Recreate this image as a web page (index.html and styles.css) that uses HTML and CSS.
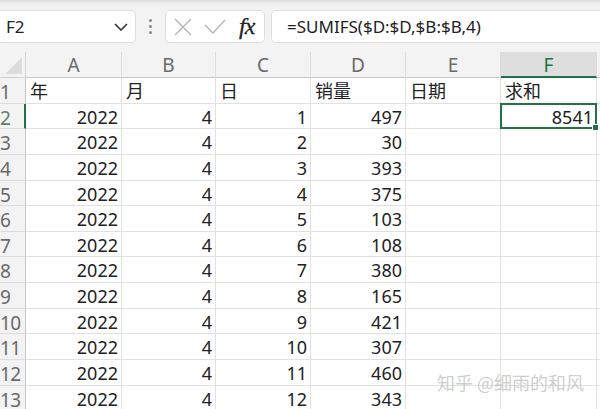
FILE: index.html
```html
<!DOCTYPE html>
<html lang="zh">
<head>
<meta charset="utf-8">
<link rel="stylesheet" href="styles.css">
</head>
<body>
<div class="app">
  <div class="topbar">
    <div class="namebox">
      <span class="name">F2</span>
      <svg class="chev" width="14" height="8" viewBox="0 0 14 8"><path d="M1 1 L7 7 L13 1" fill="none" stroke="#333" stroke-width="1.6"/></svg>
    </div>
    <div class="dots"><i></i><i></i><i></i></div>
    <div class="fxbox">
      <svg class="ic" width="20" height="20" viewBox="0 0 20 20"><path d="M2 2 L18 18 M18 2 L2 18" stroke="#b4b4b4" stroke-width="1.3" fill="none"/></svg>
      <svg class="ic" width="22" height="16" viewBox="0 0 22 16"><path d="M1 6 L9 14 L21 1" stroke="#b4b4b4" stroke-width="1.3" fill="none"/></svg>
      <span class="fx">fx</span>
    </div>
    <div class="formula">=SUMIFS($D:$D,$B:$B,4)</div>
  </div>
  <div class="sheet">
    <div class="corner"><span class="tri"></span></div>
    <div class="ch">A</div><div class="ch">B</div><div class="ch">C</div><div class="ch">D</div><div class="ch">E</div><div class="ch sel">F</div><div class="ch"></div>

    <div class="rh">1</div><div class="c">年</div><div class="c">月</div><div class="c">日</div><div class="c">销量</div><div class="c">日期</div><div class="c">求和</div><div class="c"></div>
    <div class="rh rsel">2</div><div class="c n">2022</div><div class="c n">4</div><div class="c n">1</div><div class="c n">497</div><div class="c"></div><div class="c n active">8541</div><div class="c"></div>
    <div class="rh">3</div><div class="c n">2022</div><div class="c n">4</div><div class="c n">2</div><div class="c n">30</div><div class="c"></div><div class="c"></div><div class="c"></div>
    <div class="rh">4</div><div class="c n">2022</div><div class="c n">4</div><div class="c n">3</div><div class="c n">393</div><div class="c"></div><div class="c"></div><div class="c"></div>
    <div class="rh">5</div><div class="c n">2022</div><div class="c n">4</div><div class="c n">4</div><div class="c n">375</div><div class="c"></div><div class="c"></div><div class="c"></div>
    <div class="rh">6</div><div class="c n">2022</div><div class="c n">4</div><div class="c n">5</div><div class="c n">103</div><div class="c"></div><div class="c"></div><div class="c"></div>
    <div class="rh">7</div><div class="c n">2022</div><div class="c n">4</div><div class="c n">6</div><div class="c n">108</div><div class="c"></div><div class="c"></div><div class="c"></div>
    <div class="rh">8</div><div class="c n">2022</div><div class="c n">4</div><div class="c n">7</div><div class="c n">380</div><div class="c"></div><div class="c"></div><div class="c"></div>
    <div class="rh">9</div><div class="c n">2022</div><div class="c n">4</div><div class="c n">8</div><div class="c n">165</div><div class="c"></div><div class="c"></div><div class="c"></div>
    <div class="rh">10</div><div class="c n">2022</div><div class="c n">4</div><div class="c n">9</div><div class="c n">421</div><div class="c"></div><div class="c"></div><div class="c"></div>
    <div class="rh">11</div><div class="c n">2022</div><div class="c n">4</div><div class="c n">10</div><div class="c n">307</div><div class="c"></div><div class="c"></div><div class="c"></div>
    <div class="rh">12</div><div class="c n">2022</div><div class="c n">4</div><div class="c n">11</div><div class="c n">460</div><div class="c"></div><div class="c"></div><div class="c"></div>
    <div class="rh">13</div><div class="c n">2022</div><div class="c n">4</div><div class="c n">12</div><div class="c n">343</div><div class="c"></div><div class="c"></div><div class="c"></div>
  </div>
  <div class="watermark">知乎 @细雨的和风</div>
</div>
</body>
</html>
```
FILE: styles.css
```css
html, body {
  margin: 0;
  padding: 0;
  background: #ffffff;
}
.app {
  position: relative;
  width: 600px;
  height: 409px;
  overflow: hidden;
  font-family: "Noto Sans", "Noto Sans CJK SC", sans-serif;
  color: #222;
}
.topbar {
  height: 52px;
  box-sizing: border-box;
  padding-top: 10px;
  background: linear-gradient(#dcdcdc 0px, #f1f1f1 4px, #f3f3f3 10px);
  display: flex;
  align-items: flex-start;
}
.namebox {
  margin-left: -3px;
  width: 139px;
  height: 33px;
  box-sizing: border-box;
  background: #fff;
  border: 1px solid #dedede;
  border-radius: 5px;
  display: flex;
  align-items: center;
  justify-content: space-between;
  padding: 0 7px 0 8px;
}
.name {
  font-size: 17px;
  color: #222;
}
.chev {
  display: block;
}
.dots {
  width: 29px;
  display: flex;
  flex-direction: column;
  align-items: center;
  gap: 3px;
  padding-top: 9px;
}
.dots i {
  width: 3px;
  height: 3px;
  border-radius: 50%;
  background: #8a8a8a;
  display: block;
}
.fxbox {
  width: 100px;
  height: 33px;
  box-sizing: border-box;
  background: #fff;
  border: 1px solid #dedede;
  border-radius: 5px;
  display: flex;
  align-items: center;
  padding-left: 7px;
  gap: 11px;
}
.ic {
  display: block;
}
.fx {
  font-family: "Liberation Serif", "DejaVu Serif", serif;
  font-style: italic;
  font-size: 24px;
  color: #222;
  margin-left: 2px;
  letter-spacing: -1px;
  -webkit-text-stroke: 0.3px #222;
}
.formula {
  margin-left: 6px;
  flex: 1;
  height: 33px;
  box-sizing: border-box;
  background: #fff;
  border: 1px solid #dedede;
  border-right: none;
  border-radius: 5px 0 0 5px;
  font-size: 17px;
  line-height: 31px;
  padding-left: 15px;
  color: #222;
}
.sheet {
  display: grid;
  grid-template-columns: 26px 96px 94px 95px 95px 95px 96px 10px;
  grid-template-rows: 26px;
  grid-auto-rows: 25.65px;
}
.sheet > div {
  box-sizing: border-box;
  border-right: 1px solid #e1e1e1;
  border-bottom: 1px solid #e1e1e1;
  font-size: 18px;
  white-space: nowrap;
  overflow: hidden;
}
.corner {
  background: #f3f3f3;
  position: relative;
  border-color: #d4d4d4 !important;
}
.tri {
  position: absolute;
  right: 3px;
  bottom: 3px;
  width: 0;
  height: 0;
  border-left: 17px solid transparent;
  border-bottom: 17px solid #dcdcdc;
}
.sheet > .ch {
  background: #f3f3f3;
  color: #6a6a6a;
  text-align: center;
  line-height: 26px;
  font-size: 19px;
  border-right-color: #dcdcdc;
  border-bottom-color: #c8c8c8;
}
.sheet > .ch.sel {
  background: #dedede;
  color: #217346;
  border-bottom: 2px solid #217346;
}
.sheet > .rh {
  background: #f3f3f3;
  color: #6a6a6a;
  padding-left: 0px;
  line-height: 28px;
  font-size: 19px;
  border-right-color: #c8c8c8;
  border-bottom-color: #dcdcdc;
  letter-spacing: -0.5px;
}
.sheet > .rh.rsel {
  color: #5b7f6b;
  border-right: 2px solid #217346;
}
.c {
  line-height: 27px;
  padding: 0 4px;
}
.c.n {
  text-align: right;
  padding-right: 3px;
}
.sheet > .c.active {
  position: relative;
  border: 2px solid #217346;
  margin: -1px 0 0 -1px;
  width: calc(100% + 1px);
  height: calc(100% + 1px);
  line-height: 25px;
  padding-right: 2px;
  overflow: visible;
}
.active::after {
  content: "";
  position: absolute;
  right: -4px;
  bottom: -4px;
  width: 5px;
  height: 5px;
  background: #217346;
  border: 1px solid #fff;
}
.watermark {
  position: absolute;
  left: 437px;
  top: 369px;
  font-size: 18px;
  color: rgba(185, 185, 185, 0.7);
  font-family: "Noto Sans CJK SC", sans-serif;
}
```
